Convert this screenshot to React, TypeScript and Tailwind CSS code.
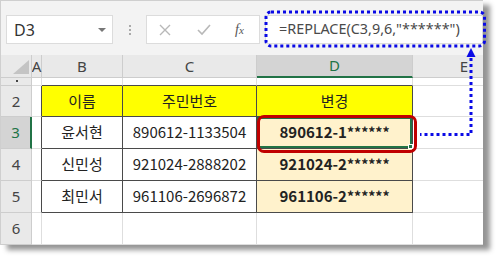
import React from "react";

const HDR = "bg-[#e9e9e9] border-r border-b border-[#cdcdcd] flex items-center justify-center text-[15px] text-[#444] font-['Noto_Sans',sans-serif]";
const GRID = "border-r border-b border-[#dedede] bg-white";
const KR = "font-['Noto_Sans_CJK_KR','Noto_Sans',sans-serif]";
const T = `border-r border-b border-[#4a4a4a] flex items-center justify-center text-[15px] text-[#222] ${KR}`;

function Masked({ head }: { head: string }) {
  return (
    <span className="relative">
      {head}
      <span className="text-[14px] font-semibold">******</span>
    </span>
  );
}

export default function App() {
  return (
    <div className="relative w-[500px] h-[261px] bg-white overflow-hidden">
      <div className="w-[483px] h-[245px] overflow-hidden bg-white border-t border-l border-[#cfcfcf] shadow-[7px_5px_5px_rgba(0,0,0,0.42)] flex flex-col">
        {/* toolbar */}
        <div className="h-[54px] shrink-0 bg-[#f3f3f3] flex items-start pt-[14px] pl-[5px]">
          <div className="w-[107px] h-[29px] bg-white border border-[#dcdcdc] flex items-center justify-between pl-[7px] pr-[6px]">
            <span className="text-[16px] text-[#333] font-['Noto_Sans',sans-serif] leading-none">D3</span>
            <span className="w-0 h-0 border-l-[4px] border-r-[4px] border-t-[4px] border-l-transparent border-r-transparent border-t-[#777]" />
          </div>
          <div className="w-[33px] h-[29px] flex flex-col items-center justify-center gap-[2px]">
            <span className="w-[2px] h-[2px] bg-[#aaa]" />
            <span className="w-[2px] h-[2px] bg-[#aaa]" />
            <span className="w-[2px] h-[2px] bg-[#aaa]" />
          </div>
          <div className="w-[114px] h-[29px] bg-white border border-[#dcdcdc] flex items-center">
            <svg width="12" height="12" viewBox="0 0 12 12" className="ml-[12px]">
              <path d="M1 1L11 11M11 1L1 11" stroke="#b8b8b8" strokeWidth="1.4" />
            </svg>
            <svg width="14" height="12" viewBox="0 0 14 12" className="ml-[26px]">
              <path d="M1 6L5 10L13 1" stroke="#b8b8b8" strokeWidth="1.6" fill="none" />
            </svg>
            <span className="ml-[24px] text-[14px] italic text-[#555] font-['Liberation_Serif',serif] leading-none">
              f<span className="text-[11px]">x</span>
            </span>
          </div>
          <div className="ml-[5px] flex-1 h-[29px] bg-white border border-[#dcdcdc] flex items-center pl-[13px]">
            <span className="text-[14.4px] text-[#4a4a4a] font-['Noto_Sans',sans-serif] leading-none">=REPLACE(C3,9,6,"******")</span>
          </div>
        </div>
        {/* sheet grid */}
        <div className="grid grid-cols-[31px_10px_81px_134px_156px_100px] grid-rows-[23px_8px_31px_32px_32px_32px_32px] w-[512px]">
          {/* header row */}
          <div className={`${HDR} relative`}>
            <svg width="16" height="14" viewBox="0 0 16 14" className="absolute left-[12px] top-[5px]">
              <polygon points="16,0 16,14 0,14" fill="#c4c4c4" />
            </svg>
          </div>
          <div className={HDR}>A</div>
          <div className={HDR}>B</div>
          <div className={HDR}>C</div>
          <div className={`${HDR} !bg-[#d4d4d4] !text-[#217346] !border-b-2 !border-b-[#217346]`}>D</div>
          <div className={`${HDR} !justify-end pr-[44px]`}>E</div>

          {/* row 1 */}
          <div className={`${HDR} relative`}>
            <span className="absolute left-[15px] top-[2px] w-[2px] h-[2px] bg-[#444]" />
          </div>
          <div className={GRID} />
          <div className={`${GRID} !border-b-[#4a4a4a]`} />
          <div className={`${GRID} !border-b-[#4a4a4a]`} />
          <div className={`${GRID} !border-b-[#4a4a4a]`} />
          <div className={GRID} />

          {/* row 2 */}
          <div className={HDR}>2</div>
          <div className={`${GRID} !border-r-[#4a4a4a]`} />
          <div className={`${T} bg-[#ffff00]`}>이름</div>
          <div className={`${T} bg-[#ffff00]`}>주민번호</div>
          <div className={`${T} bg-[#ffff00]`}>변경</div>
          <div className={GRID} />

          {/* row 3 */}
          <div className={`${HDR} !bg-[#d4d4d4] !text-[#217346] !border-r-2 !border-r-[#217346]`}>3</div>
          <div className={`${GRID} !border-r-[#4a4a4a]`} />
          <div className={T}>윤서현</div>
          <div className={T}>890612-1133504</div>
          <div className={`${T} bg-[#fff2cc] relative font-bold`}>
            <span className="absolute inset-[0px] border-2 border-[#217346]" />
            <span className="absolute right-[-1px] bottom-[-1px] w-[5px] h-[5px] bg-[#217346] border border-white" />
            <Masked head="890612-1" />
          </div>
          <div className={GRID} />

          {/* row 4 */}
          <div className={HDR}>4</div>
          <div className={`${GRID} !border-r-[#4a4a4a]`} />
          <div className={T}>신민성</div>
          <div className={T}>921024-2888202</div>
          <div className={`${T} bg-[#fff2cc] font-bold`}>
            <Masked head="921024-2" />
          </div>
          <div className={GRID} />

          {/* row 5 */}
          <div className={HDR}>5</div>
          <div className={`${GRID} !border-r-[#4a4a4a]`} />
          <div className={T}>최민서</div>
          <div className={T}>961106-2696872</div>
          <div className={`${T} bg-[#fff2cc] font-bold`}>
            <Masked head="961106-2" />
          </div>
          <div className={GRID} />

          {/* row 6 */}
          <div className={HDR}>6</div>
          <div className={GRID} />
          <div className={GRID} />
          <div className={GRID} />
          <div className={GRID} />
          <div className={GRID} />
        </div>
      </div>

      {/* annotations */}
      <div className="absolute left-[257px] top-[115px] w-[160px] h-[38px] border-[3px] border-[#c00000] rounded-[7px]" />
      <svg className="absolute left-0 top-0" width="500" height="261" viewBox="0 0 500 261">
        <rect x="266" y="12" width="218.5" height="34" rx="5" fill="none" stroke="#0a0ae6" strokeWidth="3" strokeDasharray="3 3" />
        <path d="M471 58 L471 134.5 L420 134.5" fill="none" stroke="#0a0ae6" strokeWidth="3" strokeDasharray="3 3" />
        <polygon points="471,48 466.5,57 475.5,57" fill="#0a0ae6" />
      </svg>
    </div>
  );
}
